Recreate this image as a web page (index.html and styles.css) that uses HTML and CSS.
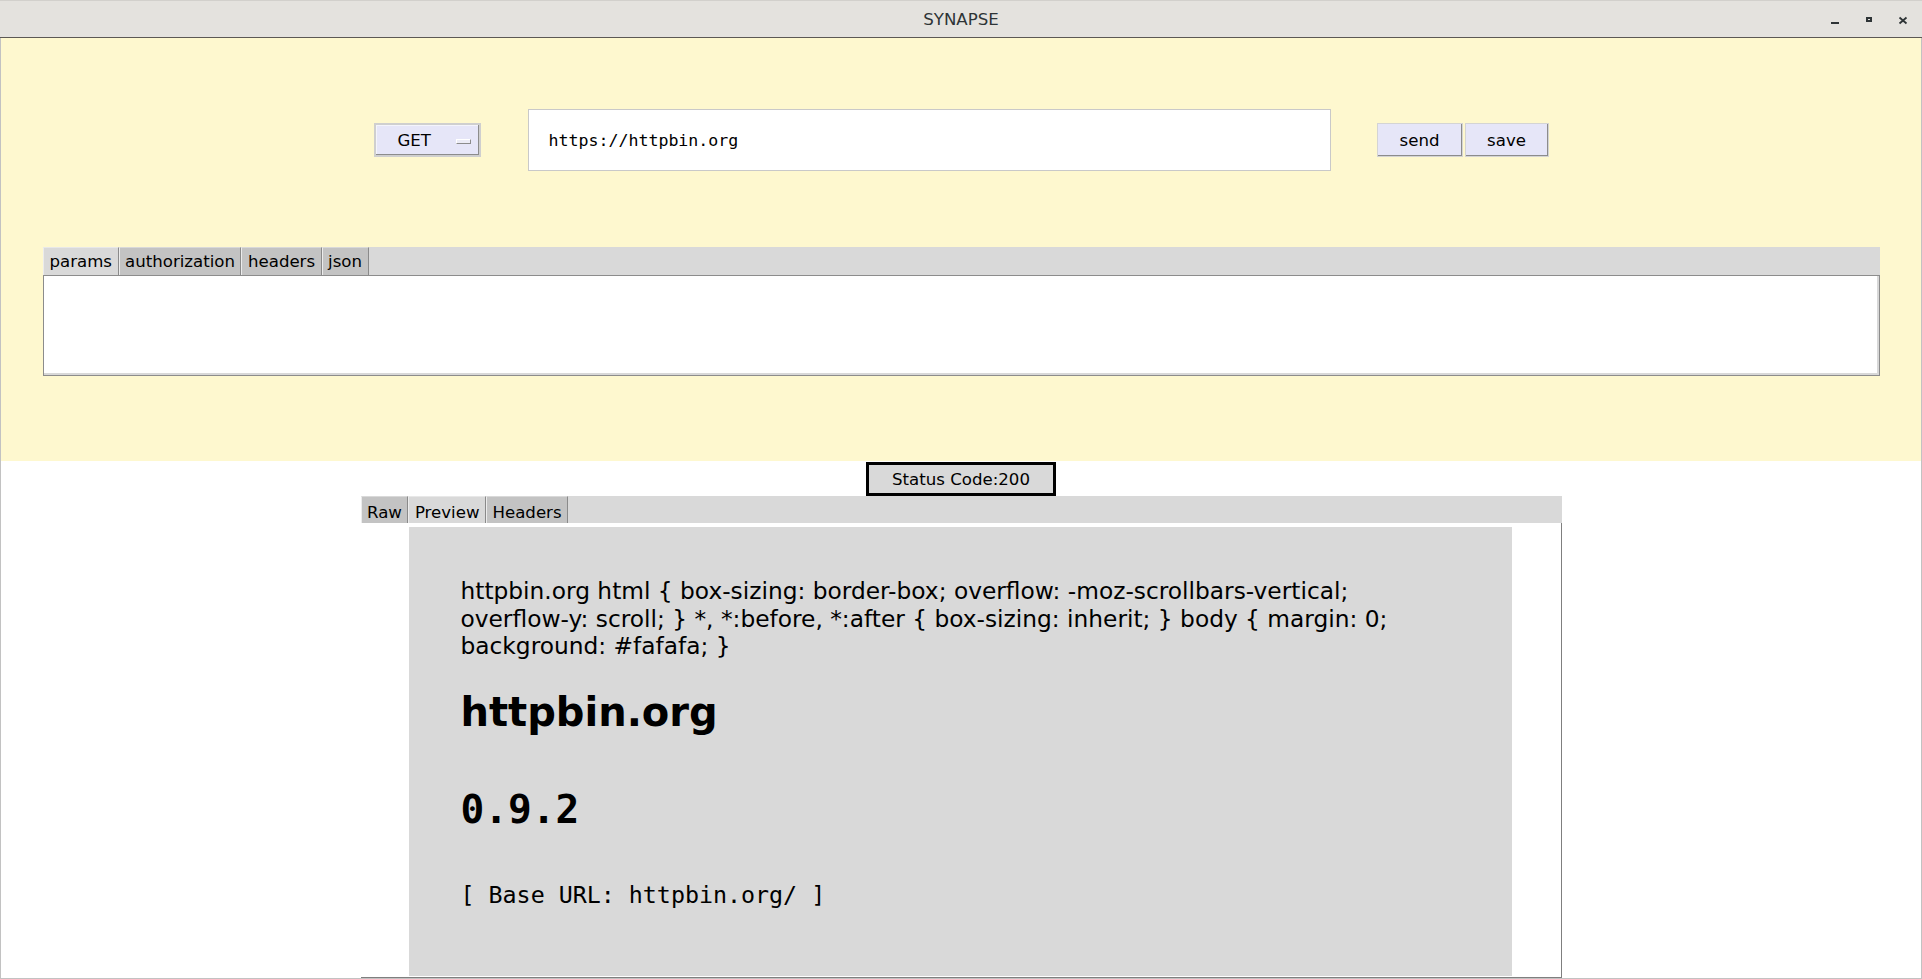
FILE: index.html
```html
<!DOCTYPE html>
<html lang="en">
<head>
<meta charset="utf-8">
<title>SYNAPSE</title>
<link rel="stylesheet" href="styles.css">
</head>
<body>
<div class="window">
  <div class="titlebar">
    <div class="title-spacer"></div>
    <div class="title">SYNAPSE</div>
    <div class="controls">
      <svg class="ctl" width="16" height="16" viewBox="0 0 16 16"><rect x="4" y="11" width="8" height="2" fill="#2e3436"/></svg>
      <svg class="ctl" width="16" height="16" viewBox="0 0 16 16"><rect x="6" y="7" width="4" height="3" fill="none" stroke="#2e3436" stroke-width="2"/></svg>
      <svg class="ctl" width="16" height="16" viewBox="0 0 16 16"><path d="M4.5 6.5 L11.5 12.5 M11.5 6.5 L4.5 12.5" stroke="#2e3436" stroke-width="1.8" fill="none"/></svg>
    </div>
  </div>
  <div class="main">
    <div class="request">
      <div class="url-row">
        <div class="method">GET <span class="indicator"></span></div>
        <div class="url">https://httpbin.org</div>
        <div class="actions">
          <div class="btn btn-send">send</div>
          <div class="btn btn-save">save</div>
        </div>
      </div>
      <div class="req-tabs">
        <div class="tab-bar">
          <div class="tab active">params</div>
          <div class="tab">authorization</div>
          <div class="tab">headers</div>
          <div class="tab">json</div>
        </div>
        <div class="req-content"></div>
      </div>
    </div>
    <div class="status">Status Code:200</div>
    <div class="resp">
      <div class="tab-bar resp-bar">
        <div class="tab">Raw</div>
        <div class="tab active">Preview</div>
        <div class="tab">Headers</div>
      </div>
      <div class="resp-content">
        <div class="preview">
          <p class="css-dump">httpbin.org html { box-sizing: border-box; overflow: -moz-scrollbars-vertical; overflow-y: scroll; } *, *:before, *:after { box-sizing: inherit; } body { margin: 0; background: #fafafa; }</p>
          <h1 class="site-title">httpbin.org</h1>
          <div class="version">0.9.2</div>
          <div class="base-url">[ Base URL: httpbin.org/ ]</div>
        </div>
      </div>
    </div>
  </div>
</div>
</body>
</html>
```
FILE: styles.css
```css
html, body {
  margin: 0;
  padding: 0;
  background: #ffffff;
}

body {
  font-family: "DejaVu Sans", sans-serif;
  color: #000;
}

.window {
  width: 1922px;
  height: 979px;
  display: flex;
  flex-direction: column;
  overflow: hidden;
}

/* ---------- title bar ---------- */
.titlebar {
  height: 36px;
  flex: none;
  border-top: 1px solid #d2d0cc;
  border-bottom: 1px solid #5c5854;
  background: #e4e2de;
  display: grid;
  grid-template-columns: 1fr auto 1fr;
  align-items: center;
}

.title {
  font-size: 16.6px;
  color: #2e3436;
  padding-top: 1px;
}

.controls {
  justify-self: end;
  display: flex;
  gap: 18px;
  padding-right: 11px;
}

.ctl {
  display: block;
}

/* ---------- main frame ---------- */
.main {
  flex: 1;
  display: flex;
  flex-direction: column;
  border-left: 1px solid #c2c2c2;
  border-right: 1px solid #c2c2c2;
  border-bottom: 1px solid #c2c2c2;
  min-height: 0;
}

/* ---------- request panel ---------- */
.request {
  height: 423px;
  flex: none;
  background: #fef8cf;
  box-sizing: border-box;
  padding-top: 71px;
}

.url-row {
  display: flex;
  align-items: center;
  justify-content: center;
  height: 62px;
}

.method {
  width: 107px;
  height: 34px;
  box-sizing: border-box;
  background: #e6e6f8;
  border: 2px solid #cfcfcf;
  box-shadow: inset -1px -1px 0 #8c8c8c, inset 1px 1px 0 #f4f4fb;
  display: flex;
  align-items: center;
  justify-content: space-between;
  padding: 0 8px 0 22px;
  margin-right: 47px;
  font-size: 16.6px;
}

.indicator {
  width: 13px;
  height: 3px;
  background: #ececf6;
  border: 1px solid;
  border-color: #fff #8c8c8c #8c8c8c #fff;
  margin-top: 2px;
}

.url {
  width: 803px;
  height: 62px;
  box-sizing: border-box;
  background: #ffffff;
  border: 1px solid #c9c9c9;
  padding-left: 20px;
  display: flex;
  align-items: center;
  font-family: "DejaVu Sans Mono", monospace;
  font-size: 16.6px;
  margin-right: 46px;
}

.actions {
  display: flex;
  gap: 2px;
}

.btn {
  height: 34px;
  box-sizing: border-box;
  background: #e6e6f8;
  border: 1px solid #d4d4d4;
  box-shadow: inset -1px -1px 0 #8c8c8c;
  display: flex;
  align-items: center;
  justify-content: center;
  font-size: 16.6px;
}

.btn-send { width: 86px; }
.btn-save { width: 84px; }

/* ---------- tabs ---------- */
.req-tabs {
  margin: 76px 41px 0 42px;
}

.tab-bar {
  height: 28px;
  background: #d9d9d9;
  display: flex;
}

.tab {
  height: 28px;
  box-sizing: border-box;
  padding: 0 5.5px;
  line-height: 27px;
  font-size: 16.6px;
  background: #c3c3c3;
  border-left: 1px solid #ececec;
  border-right: 1px solid #8a8a8a;
  border-top: 1px solid #d9d9d9;
}

.tab.active {
  background: #d9d9d9;
  border-top-color: #e8e8e8;
}

.req-content {
  height: 101px;
  box-sizing: border-box;
  background: #ffffff;
  border: 1px solid #8c8c8c;
  box-shadow: inset -2px -2px 0 #d8d8d8;
}

/* ---------- response ---------- */
.status {
  flex: none;
  width: 190px;
  height: 34px;
  box-sizing: border-box;
  margin: 1px auto 0;
  border: 3px solid #000;
  background: #d9d9d9;
  font-size: 16.6px;
  display: flex;
  align-items: center;
  justify-content: center;
}

.resp {
  width: 1201px;
  margin: 0 auto;
  flex: 1;
  display: flex;
  flex-direction: column;
  min-height: 0;
}

.resp-bar {
  height: 27px;
  flex: none;
}

.resp-bar .tab {
  height: 27px;
  line-height: 24px;
  padding-top: 4px;
}

.resp-content {
  flex: 1;
  min-height: 0;
  display: flex;
  padding: 4px 49px 1px 48px;
  background: #ffffff;
  border-right: 1px solid #7f7f7f;
  border-bottom: 1px solid #7f7f7f;
}

.preview {
  flex: 1;
  background: #d9d9d9;
  padding: 50px 52px 0;
  overflow: hidden;
}

.css-dump {
  margin: 0;
  font-size: 23.3px;
  line-height: 27.5px;
}

.site-title {
  margin: 29px 0 0;
  font-size: 40px;
  line-height: 47px;
  font-weight: bold;
}

.version {
  margin-top: 50px;
  font-family: "DejaVu Sans Mono", monospace;
  font-weight: bold;
  font-size: 39.5px;
  line-height: 46px;
}

.base-url {
  margin-top: 49px;
  font-family: "DejaVu Sans Mono", monospace;
  font-size: 23.3px;
  line-height: 27.5px;
}
```
